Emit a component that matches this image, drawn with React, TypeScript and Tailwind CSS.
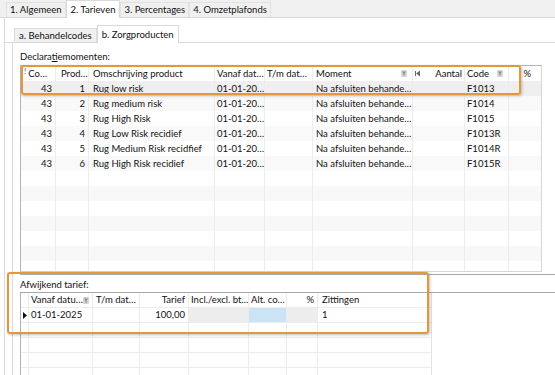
import React from "react";

const upperRows = [
  ["43", "1", "Rug low risk", "01-01-20…", "", "Na afsluiten behande…", "", "F1013", ""],
  ["43", "2", "Rug medium risk", "01-01-20…", "", "Na afsluiten behande…", "", "F1014", ""],
  ["43", "3", "Rug High Risk", "01-01-20…", "", "Na afsluiten behande…", "", "F1015", ""],
  ["43", "4", "Rug Low Risk recidief", "01-01-20…", "", "Na afsluiten behande…", "", "F1013R", ""],
  ["43", "5", "Rug Medium Risk recidfief", "01-01-20…", "", "Na afsluiten behande…", "", "F1014R", ""],
  ["43", "6", "Rug High Risk recidief", "01-01-20…", "", "Na afsluiten behande…", "", "F1015R", ""],
];

const upperCols = "grid grid-cols-[35px_33px_126px_50px_48px_100px_52px_44px_32px] grid-rows-[15px]";
const lowerCols = "grid grid-cols-[8px_64px_47px_49px_60px_38px_31px_114px] grid-rows-[14px]";
const cell = "overflow-hidden whitespace-nowrap border-r border-[#ececec]";

const Funnel = () => (
  <svg width="6" height="7" viewBox="0 0 6 7" className="shrink-0">
    <rect x="0" y="0" width="6" height="7" rx="1" fill="#d4d4d4" />
    <path d="M1 1.5h4L3.6 3.4v2.4L2.4 5.2V3.4z" fill="#8a8a8a" />
  </svg>
);

const Pin = () => (
  <svg width="6" height="7" viewBox="0 0 6 7" className="shrink-0">
    <path d="M5 0.5v6L1.2 3.5z" fill="#666" />
    <rect x="0" y="1" width="1" height="5" fill="#666" />
  </svg>
);

const Tab = ({ label, active, inner }: { label: string; active?: boolean; inner?: boolean }) => (
  <div
    className={
      active
        ? "relative z-10 -mb-px flex h-[18px] items-center border border-b-0 border-[#d9d9d9] bg-white px-[4px]"
        : inner
          ? "flex h-[14px] items-center border border-b-0 border-[#dcdcdc] bg-[#f0f0f0] px-[4px]"
          : "flex h-[15px] items-center border border-b-0 border-[#e2e2e2] bg-[#f0f0f0] px-[3px]"
    }
  >
    <span className="whitespace-nowrap leading-[12px]">{label}</span>
  </div>
);

const App = () => {
  const emptyUpper = Array.from({ length: 8 });
  const emptyLower = Array.from({ length: 4 });

  return (
    <div className="relative flex h-[375px] w-[555px] flex-col overflow-hidden bg-white font-['Lato',sans-serif] text-[9.5px] text-[#111]">
      {/* top tab strip */}
      <div className="flex h-[18px] shrink-0 items-end border-b border-[#d9d9d9] bg-[#f0f0f0] pl-[6px]">
        <Tab label="1. Algemeen" />
        <Tab label="2. Tarieven" active />
        <Tab label="3. Percentages" />
        <Tab label="4. Omzetplafonds" />
      </div>

      <div className="flex flex-1">
        <div className="w-[4px] shrink-0" />
        <div className="flex flex-1 flex-col border-l border-[#dadada]">
          {/* inner tab strip */}
          <div className="flex h-[25px] shrink-0 items-end border-b border-[#d9d9d9] pl-[9px]">
            <Tab label="a. Behandelcodes" inner />
            <Tab label="b. Zorgproducten" active />
          </div>

          <div className="flex flex-1 pl-[7px]">
            <div className="flex flex-1 flex-col border-l border-[#dadada] pl-[7px]">
              <div className="h-[22px] shrink-0 pt-[8px] leading-[12px]">
                Declara<span className="underline">t</span>iemomenten:
              </div>

              {/* upper grid */}
              <div className="h-[207px] w-[522px] shrink-0 overflow-hidden border border-[#b4b4b4] border-r-[#d6d6d6] border-b-[#d6d6d6]">
                <div className={`${upperCols} h-[15px] leading-[15px]`}>
                  <div className={`${cell} flex items-start gap-[2px] pl-[3px]`}>
                    <span className="pt-[1px] text-[8px] font-bold leading-[8px] text-[#8a8a8a]">!</span>
                    <span className="leading-[15px]">Co…</span>
                  </div>
                  <div className={`${cell} pl-[5px]`}>Prod…</div>
                  <div className={`${cell} pl-[4px]`}>Omschrijving product</div>
                  <div className={`${cell} pl-[2px]`}>Vanaf dat…</div>
                  <div className={`${cell} pl-[2px]`}>T/m dat…</div>
                  <div className={`${cell} flex items-center justify-between pl-[3px] pr-[5px]`}>
                    <span>Moment</span>
                    <Funnel />
                  </div>
                  <div className={`${cell} flex items-center justify-between pl-[2px] pr-[2px]`}>
                    <Pin />
                    <span>Aantal</span>
                  </div>
                  <div className={`${cell} flex items-center justify-between pl-[2px] pr-[5px]`}>
                    <span>Code</span>
                    <Funnel />
                  </div>
                  <div className="pr-[10px] text-right">%</div>
                </div>

                {upperRows.map((r, i) => (
                  <div
                    key={i}
                    className={`${upperCols} h-[15px] leading-[15px] ${i === 0 ? "bg-[#efefef]" : i % 2 === 1 ? "bg-[#f9f9f9]" : ""}`}
                  >
                    <div className={`${cell} pr-[3px] text-right`}>{r[0]}</div>
                    <div className={`${cell} pr-[3px] text-right`}>{r[1]}</div>
                    <div className={`${cell} pl-[4px]`}>{r[2]}</div>
                    <div className={`${cell} pl-[2px]`}>{r[3]}</div>
                    <div className={cell}>{r[4]}</div>
                    <div className={`${cell} pl-[3px]`}>{r[5]}</div>
                    <div className={cell}>{r[6]}</div>
                    <div className={`${cell} pl-[2px]`}>{r[7]}</div>
                    <div>{r[8]}</div>
                  </div>
                ))}

                {emptyUpper.map((_, i) => (
                  <div key={i} className={`${upperCols} h-[15px] ${i % 2 === 1 ? "bg-[#f8f8f8]" : ""}`}>
                    <div className={cell} />
                    <div className={cell} />
                    <div className={cell} />
                    <div className={cell} />
                    <div className={cell} />
                    <div className={cell} />
                    <div className={cell} />
                    <div className={cell} />
                    <div />
                  </div>
                ))}
              </div>

              {/* lower panel */}
              <div className="mt-[2px] flex flex-1 flex-col border-t border-[#a8a8a8]">
                <div className="h-[17px] shrink-0 pt-[4px] leading-[12px]">Afwijkend tarief:</div>
                <div className="flex flex-1 border-t border-[#a8a8a8]">
                  <div className="w-[412px] border-l border-r border-[#b4b4b4] border-r-[#e2e2e2]">
                    <div className={`${lowerCols} h-[15px] border-b border-[#ececec] leading-[14px]`}>
                      <div className={cell} />
                      <div className={`${cell} flex items-center justify-between pl-[2px] pr-[4px]`}>
                        <span>Vanaf datu…</span>
                        <Funnel />
                      </div>
                      <div className={`${cell} pl-[3px]`}>T/m dat…</div>
                      <div className={`${cell} pr-[3px] text-right`}>Tarief</div>
                      <div className={`${cell} pl-[2px]`}>Incl./excl. bt…</div>
                      <div className={`${cell} pl-[2px]`}>Alt. co…</div>
                      <div className={`${cell} pr-[3px] text-right`}>%</div>
                      <div className="pl-[4px]">Zittingen</div>
                    </div>

                    <div className={`${lowerCols} h-[15px] border-b border-[#ececec] leading-[14px]`}>
                      <div className={`${cell} flex items-center justify-center`}>
                        <svg width="4" height="7" viewBox="0 0 4 7">
                          <path d="M0 0l4 3.5L0 7z" fill="#111" />
                        </svg>
                      </div>
                      <div className={`${cell} pl-[2px]`}>01-01-2025</div>
                      <div className={cell} />
                      <div className={`${cell} pr-[3px] text-right`}>100,00</div>
                      <div className={`${cell} bg-[#ededed]`} />
                      <div className={`${cell} bg-[#cce3f6]`} />
                      <div className={`${cell} bg-[#ededed]`} />
                      <div className="pl-[4px]">1</div>
                    </div>

                    {emptyLower.map((_, i) => (
                      <div key={i} className={`${lowerCols} h-[15px] border-b border-[#ececec]`}>
                        <div className={cell} />
                        <div className={cell} />
                        <div className={cell} />
                        <div className={cell} />
                        <div className={cell} />
                        <div className={cell} />
                        <div className={cell} />
                        <div />
                      </div>
                    ))}
                  </div>
                  <div className="flex-1" />
                </div>
              </div>
            </div>
          </div>
        </div>
      </div>

      {/* annotation highlights */}
      <div className="pointer-events-none absolute left-[21px] top-[65px] h-[30px] w-[500px] rounded-[3px] border-2 border-[#e5973a] shadow-[1px_1px_3px_rgba(0,0,0,0.25)]" />
      <div className="pointer-events-none absolute left-[7px] top-[272px] h-[62px] w-[422px] rounded-[3px] border-2 border-[#e5973a] shadow-[1px_1px_3px_rgba(0,0,0,0.25)]" />
    </div>
  );
};

export default App;
